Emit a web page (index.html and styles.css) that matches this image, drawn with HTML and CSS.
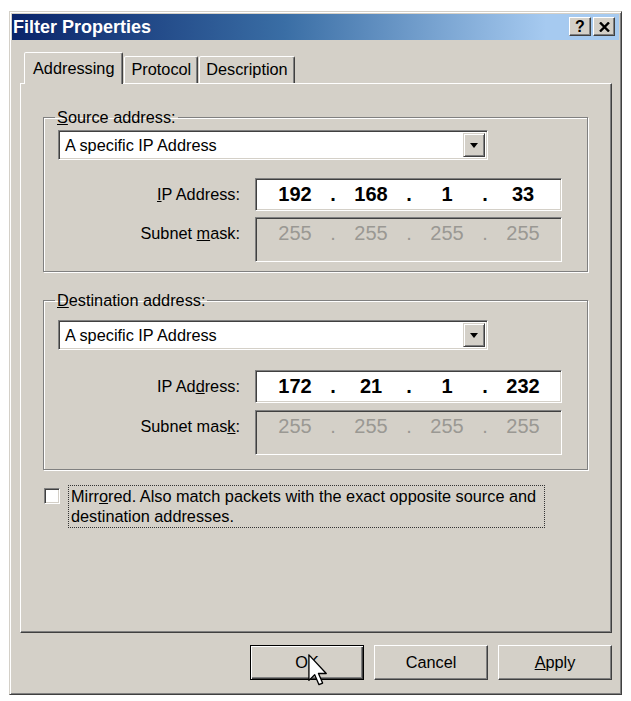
FILE: index.html
```html
<!DOCTYPE html>
<html lang="en">
<head>
    <meta charset="UTF-8">
    <title>Filter Properties</title>
    <link rel="stylesheet" href="styles.css">
</head>
<body>
    <div class="window">
        <div class="titlebar">
            <span class="title">Filter Properties</span>
            <div class="title-buttons">
                <span class="tbtn">?</span>
                <span class="tbtn">
                    <svg width="11" height="10" viewBox="0 0 11 10"><path d="M1 0.5 L10 9.5 M10 0.5 L1 9.5" stroke="#000" stroke-width="2.4"/></svg>
                </span>
            </div>
        </div>

        <div class="content">
            <!-- Tabs -->
            <div class="tabs">
                <div class="tab active">Addressing</div>
                <div class="tab">Protocol</div>
                <div class="tab">Description</div>
            </div>

            <div class="panel">
                <fieldset class="group">
                    <legend><u>S</u>ource address:</legend>
                    <div class="combo">
                        <span class="combo-text">A specific IP Address</span>
                        <span class="combo-btn">
                            <svg width="8" height="5" viewBox="0 0 8 5"><path d="M0 0 H8 L4 5 Z" fill="#000"/></svg>
                        </span>
                    </div>
                    <div class="addr-grid">
                        <label class="addr-label"><u>I</u>P Address:</label>
                        <div class="ip-field">
                            <span class="octet">192</span><span class="dot">.</span>
                            <span class="octet">168</span><span class="dot">.</span>
                            <span class="octet">1</span><span class="dot">.</span>
                            <span class="octet">33</span>
                        </div>
                        <label class="addr-label">Subnet <u>m</u>ask:</label>
                        <div class="ip-field disabled">
                            <span class="octet">255</span><span class="dot">.</span>
                            <span class="octet">255</span><span class="dot">.</span>
                            <span class="octet">255</span><span class="dot">.</span>
                            <span class="octet">255</span>
                        </div>
                    </div>
                </fieldset>

                <fieldset class="group dest">
                    <legend><u>D</u>estination address:</legend>
                    <div class="combo">
                        <span class="combo-text">A specific IP Address</span>
                        <span class="combo-btn">
                            <svg width="8" height="5" viewBox="0 0 8 5"><path d="M0 0 H8 L4 5 Z" fill="#000"/></svg>
                        </span>
                    </div>
                    <div class="addr-grid">
                        <label class="addr-label">IP Ad<u>d</u>ress:</label>
                        <div class="ip-field">
                            <span class="octet">172</span><span class="dot">.</span>
                            <span class="octet">21</span><span class="dot">.</span>
                            <span class="octet">1</span><span class="dot">.</span>
                            <span class="octet">232</span>
                        </div>
                        <label class="addr-label">Subnet mas<u>k</u>:</label>
                        <div class="ip-field disabled">
                            <span class="octet">255</span><span class="dot">.</span>
                            <span class="octet">255</span><span class="dot">.</span>
                            <span class="octet">255</span><span class="dot">.</span>
                            <span class="octet">255</span>
                        </div>
                    </div>
                </fieldset>

                <div class="check-row">
                    <span class="checkbox"></span>
                    <span class="check-label">Mirr<u>o</u>red. Also match packets with the exact opposite source and<br>destination addresses.</span>
                </div>
            </div>

            <!-- Dialog buttons -->
            <div class="buttons">
                <div class="btn default">
                    <span>OK</span>
                    <svg class="cursor" width="20" height="33" viewBox="0 0 12 20"><path d="M0.5 0.5 V16 L4 12.6 L6.6 18.6 L8.8 17.6 L6.3 11.8 H11 Z" fill="#fff" stroke="#000" stroke-width="0.8" stroke-linejoin="round"/></svg>
                </div>
                <div class="btn">Cancel</div>
                <div class="btn"><u>A</u>pply</div>
            </div>
        </div>
    </div>
</body>
</html>
```

FILE: styles.css
```css
* {
    box-sizing: border-box;
}

body {
    margin: 0;
    background-color: #fff;
    font-family: "Liberation Sans", Arial, sans-serif;
    font-size: 16.3px;
    color: #000;
}

.window {
    width: 613px;
    height: 684px;
    margin: 11px 0 0 9px;
    padding: 2px;
    background-color: #d4d0c8;
    border: 1px solid;
    border-color: #d4d0c8 #404040 #404040 #d4d0c8;
    box-shadow: inset 1px 1px #fff, inset -1px -1px #808080;
}

.titlebar {
    height: 26px;
    display: flex;
    align-items: center;
    justify-content: space-between;
    padding: 0 4px 0 1px;
    background: linear-gradient(to right, #0a246a 0%, #3a6ea5 45%, #a6caf0 88%);
}

.title {
    color: #fff;
    font-weight: bold;
    font-size: 18px;
}

.title-buttons {
    display: flex;
    gap: 2px;
    margin-top: -1px;
}

.tbtn {
    width: 22px;
    height: 19px;
    display: flex;
    align-items: center;
    justify-content: center;
    font-weight: bold;
    font-size: 16px;
    background-color: #d4d0c8;
    border: 1px solid;
    border-color: #fff #404040 #404040 #fff;
    box-shadow: inset -1px -1px #808080;
}

.content {
    padding: 12px 7px 0 8px;
}

/* tab strip */
.tabs {
    display: flex;
    align-items: flex-end;
    height: 31px;
    padding-left: 4px;
}

.tab {
    height: 27px;
    padding: 3px 6px 0 6px;
    margin-right: 1px;
    border: 1px solid;
    border-bottom: none;
    border-color: #fff #404040 transparent #fff;
    border-radius: 2px 2px 0 0;
    box-shadow: inset -1px 0 #808080;
    background-color: #d4d0c8;
}

.tab.active {
    position: relative;
    z-index: 1;
    height: 32px;
    margin-bottom: -1px;
    padding: 6px 8px 0 8px;
}

.panel {
    width: 592px;
    height: 550px;
    padding: 24px 23px 0 22px;
    border: 1px solid;
    border-color: #fff #404040 #404040 #fff;
    box-shadow: inset -1px -1px #808080;
}

/* group boxes */
.group {
    margin: 0;
    min-width: 0;
    padding: 4px 13px 9px 14px;
    border: 1px solid #808080;
    box-shadow: inset 1px 1px #fff, 1px 1px #fff;
}

.group legend {
    padding: 0 2px;
    margin-left: -3px;
    line-height: 18px;
}

.group.dest {
    margin-top: 19px;
    padding-top: 11px;
    padding-bottom: 14px;
}

.combo {
    width: 430px;
    height: 30px;
    display: flex;
    align-items: stretch;
    padding: 2px;
    background-color: #fff;
    border: 1px solid;
    border-color: #808080 #fff #fff #808080;
    box-shadow: inset 1px 1px #404040, inset -1px -1px #d4d0c8;
}

.combo-text {
    flex: 1;
    line-height: 24px;
    padding-left: 4px;
}

.combo-btn {
    width: 22px;
    display: flex;
    align-items: center;
    justify-content: center;
    background-color: #d4d0c8;
    border: 1px solid;
    border-color: #d4d0c8 #404040 #404040 #d4d0c8;
    box-shadow: inset 1px 1px #fff, inset -1px -1px #808080;
}

.addr-grid {
    display: grid;
    grid-template-columns: 182px 307px;
    column-gap: 15px;
    row-gap: 6px;
    margin-top: 18px;
}

.dest .addr-grid {
    margin-top: 20px;
    row-gap: 7px;
}

.addr-label {
    text-align: right;
    line-height: 20px;
    padding-top: 6px;
}

.ip-field {
    height: 33px;
    display: flex;
    align-items: flex-start;
    padding: 2px 0 0 11px;
    background-color: #fff;
    border: 1px solid;
    border-color: #808080 #fff #fff #808080;
    box-shadow: inset 1px 1px #404040, inset -1px -1px #d4d0c8;
    font-size: 20px;
    font-weight: bold;
    line-height: 26px;
}

.ip-field.disabled {
    height: 45px;
    background-color: #d4d0c8;
    color: #9a9893;
    font-weight: normal;
}

.octet {
    width: 56px;
    text-align: center;
}

.dot {
    width: 20px;
    text-align: center;
}

/* mirrored checkbox */
.check-row {
    display: flex;
    align-items: flex-start;
    margin-top: 15px;
}

.checkbox {
    width: 16px;
    height: 16px;
    margin: 3px 0 0 1px;
    background-color: #fff;
    border: 1px solid;
    border-color: #808080 #fff #fff #808080;
    box-shadow: inset 1px 1px #404040, inset -1px -1px #d4d0c8;
}

.check-label {
    margin-left: 8px;
    padding: 0 2px 1px 2px;
    width: 477px;
    white-space: nowrap;
    line-height: 20px;
    border: 1px dotted #333;
}

/* bottom buttons */
.buttons {
    display: flex;
    justify-content: flex-end;
    gap: 10px;
    margin-top: 12px;
}

.btn {
    width: 114px;
    height: 35px;
    display: flex;
    align-items: center;
    justify-content: center;
    border: 1px solid;
    border-color: #fff #404040 #404040 #fff;
    box-shadow: inset -1px -1px #808080;
}

.btn.default {
    position: relative;
    border-color: #000;
    box-shadow: inset 1px 1px #fff, inset -1px -1px #404040, inset -2px -2px #808080;
}

.cursor {
    position: absolute;
    left: 57px;
    top: 8px;
}
```
